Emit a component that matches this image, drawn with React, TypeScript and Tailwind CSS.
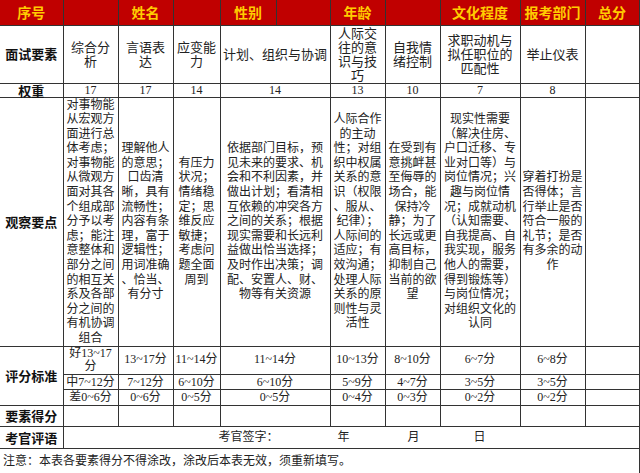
import React from "react";

type Factor = {
  name: string;
  weight: string;
  points: string;
  good: string;
  mid: string;
  bad: string;
  span?: number;
};

const headers = ["序号", "", "姓名", "", "性别", "", "年龄", "", "文化程度", "报考部门", "总分"];

const colWidths = [63, 55, 55, 47, 56, 54, 55, 55, 80, 65, 54];

const factors: Factor[] = [
  {
    name: "综合分\n析",
    weight: "17",
    points:
      "对事物能\n从宏观方\n面进行总\n体考虑；\n对事物能\n从微观方\n面对其各\n个组成部\n分予以考\n虑；能注\n意整体和\n部分之间\n的相互关\n系及各部\n分之间的\n有机协调\n组合",
    good: "好13~17\n分",
    mid: "中7~12分",
    bad: "差0~6分",
  },
  {
    name: "言语表\n达",
    weight: "17",
    points:
      "理解他人\n的意思；\n口齿清\n晰，具有\n流畅性；\n内容有条\n理，富于\n逻辑性；\n用词准确\n、恰当、\n有分寸",
    good: "13~17分",
    mid: "7~12分",
    bad: "0~6分",
  },
  {
    name: "应变能\n力",
    weight: "14",
    points: "有压力\n状况；\n情绪稳\n定；思\n维反应\n敏捷；\n考虑问\n题全面\n周到",
    good: "11~14分",
    mid: "6~10分",
    bad: "0~5分",
  },
  {
    name: "计划、组织与协调",
    weight: "14",
    span: 2,
    points:
      "依据部门目标，预\n见未来的要求、机\n会和不利因素，并\n做出计划；看清相\n互依赖的冲突各方\n之间的关系；根据\n现实需要和长远利\n益做出恰当选择；\n及时作出决策；调\n配、安置人、财、\n物等有关资源",
    good: "11~14分",
    mid: "6~10分",
    bad: "0~5分",
  },
  {
    name: "人际交\n往的意\n识与技\n巧",
    weight: "13",
    points:
      "人际合作\n的主动\n性；对组\n织中权属\n关系的意\n识（权限\n、服从、\n纪律）；\n人际间的\n适应；有\n效沟通；\n处理人际\n关系的原\n则性与灵\n活性",
    good: "10~13分",
    mid: "5~9分",
    bad: "0~4分",
  },
  {
    name: "自我情\n绪控制",
    weight: "10",
    points:
      "在受到有\n意挑衅甚\n至侮辱的\n场合，能\n保持冷\n静；为了\n长远或更\n高目标，\n抑制自己\n当前的欲\n望",
    good: "8~10分",
    mid: "4~7分",
    bad: "0~3分",
  },
  {
    name: "求职动机与\n拟任职位的\n匹配性",
    weight: "7",
    points:
      "现实性需要\n（解决住房、\n户口迁移、专\n业对口等）与\n岗位情况；兴\n趣与岗位情\n况；成就动机\n（认知需要、\n自我提高、自\n我实现，服务\n他人的需要，\n得到锻炼等）\n与岗位情况；\n对组织文化的\n认同",
    good: "6~7分",
    mid: "3~5分",
    bad: "0~2分",
  },
  {
    name: "举止仪表",
    weight: "8",
    points: "穿着打扮是\n否得体；言\n行举止是否\n符合一般的\n礼节；是否\n有多余的动\n作",
    good: "6~8分",
    mid: "3~5分",
    bad: "0~2分",
  },
];

const td = "border border-[#333] p-0 text-center align-middle whitespace-pre";
const label = `${td} border-l-0 font-bold text-[13px] text-[#111]`;
const body = "font-['Liberation_Serif','Noto_Sans_CJK_SC',serif] text-[12px] text-[#222]";

export default function App() {
  return (
    <div className="w-[640px] h-[473px] bg-white overflow-hidden font-['Noto_Sans_CJK_SC',sans-serif]">
      <table className="table-fixed border-collapse w-[639px]">
        <colgroup>
          {colWidths.map((w, i) => (
            <col key={i} style={{ width: w }} />
          ))}
        </colgroup>
        <tbody>
          {/* 表头 */}
          <tr className="h-[25px] bg-[#c00000]">
            {headers.map((h, i) => (
              <td
                key={i}
                className={`${td} ${i === 0 ? "border-l-0" : ""} border-t-0 text-[14px] font-bold leading-[24px] text-[#ffcc00]`}
              >
                {h}
              </td>
            ))}
          </tr>

          <tr className="h-[58px]">
            <td className={`${label} leading-[14px]`}>面试要素</td>
            {factors.map((f, i) => (
              <td key={i} colSpan={f.span} className={`${td} text-[13px] leading-[14px] text-[#222]`}>
                {f.name}
              </td>
            ))}
            <td className={td} />
          </tr>

          <tr className="h-[14px]">
            <td className={`${label} leading-[13px]`}>权重</td>
            {factors.map((f, i) => (
              <td key={i} colSpan={f.span} className={`${td} ${body} leading-[13px]`}>
                {f.weight}
              </td>
            ))}
            <td className={td} />
          </tr>

          <tr className="h-[249px]">
            <td className={label}>观察要点</td>
            {factors.map((f, i) => (
              <td key={i} colSpan={f.span} className={`${td} ${body} leading-[14.6px]`}>
                {f.points}
              </td>
            ))}
            <td className={td} />
          </tr>

          {/* 评分标准 */}
          <tr className="h-[28px]">
            <td rowSpan={3} className={label}>
              评分标准
            </td>
            {factors.map((f, i) => (
              <td key={i} colSpan={f.span} className={`${td} ${body} leading-[13.5px]`}>
                {f.good}
              </td>
            ))}
            <td className={td} />
          </tr>
          <tr className="h-[15px]">
            {factors.map((f, i) => (
              <td key={i} colSpan={f.span} className={`${td} ${body} leading-[14px]`}>
                {f.mid}
              </td>
            ))}
            <td className={td} />
          </tr>
          <tr className="h-[16px]">
            {factors.map((f, i) => (
              <td key={i} colSpan={f.span} className={`${td} ${body} leading-[14px]`}>
                {f.bad}
              </td>
            ))}
            <td className={td} />
          </tr>

          <tr className="h-[21px]">
            <td className={`${label} leading-[20px]`}>要素得分</td>
            {factors.map((f, i) => (
              <td key={i} colSpan={f.span} className={td} />
            ))}
            <td className={td} />
          </tr>

          <tr className="h-[22px]">
            <td className={`${label} leading-[21px]`}>考官评语</td>
            <td colSpan={10} className={`${td} ${body} text-left`}>
              <div className="flex items-center leading-[21px]">
                <span className="ml-[155px]">考官签字：</span>
                <span className="ml-[59px]">年</span>
                <span className="ml-[58px]">月</span>
                <span className="ml-[54px]">日</span>
              </div>
            </td>
          </tr>

          <tr className="h-[26px]">
            <td colSpan={11} className={`${td} ${body} border-l-0 text-left pl-[3px] leading-[25px]`}>
              注意：本表各要素得分不得涂改，涂改后本表无效，须重新填写。
            </td>
          </tr>
        </tbody>
      </table>
    </div>
  );
}
